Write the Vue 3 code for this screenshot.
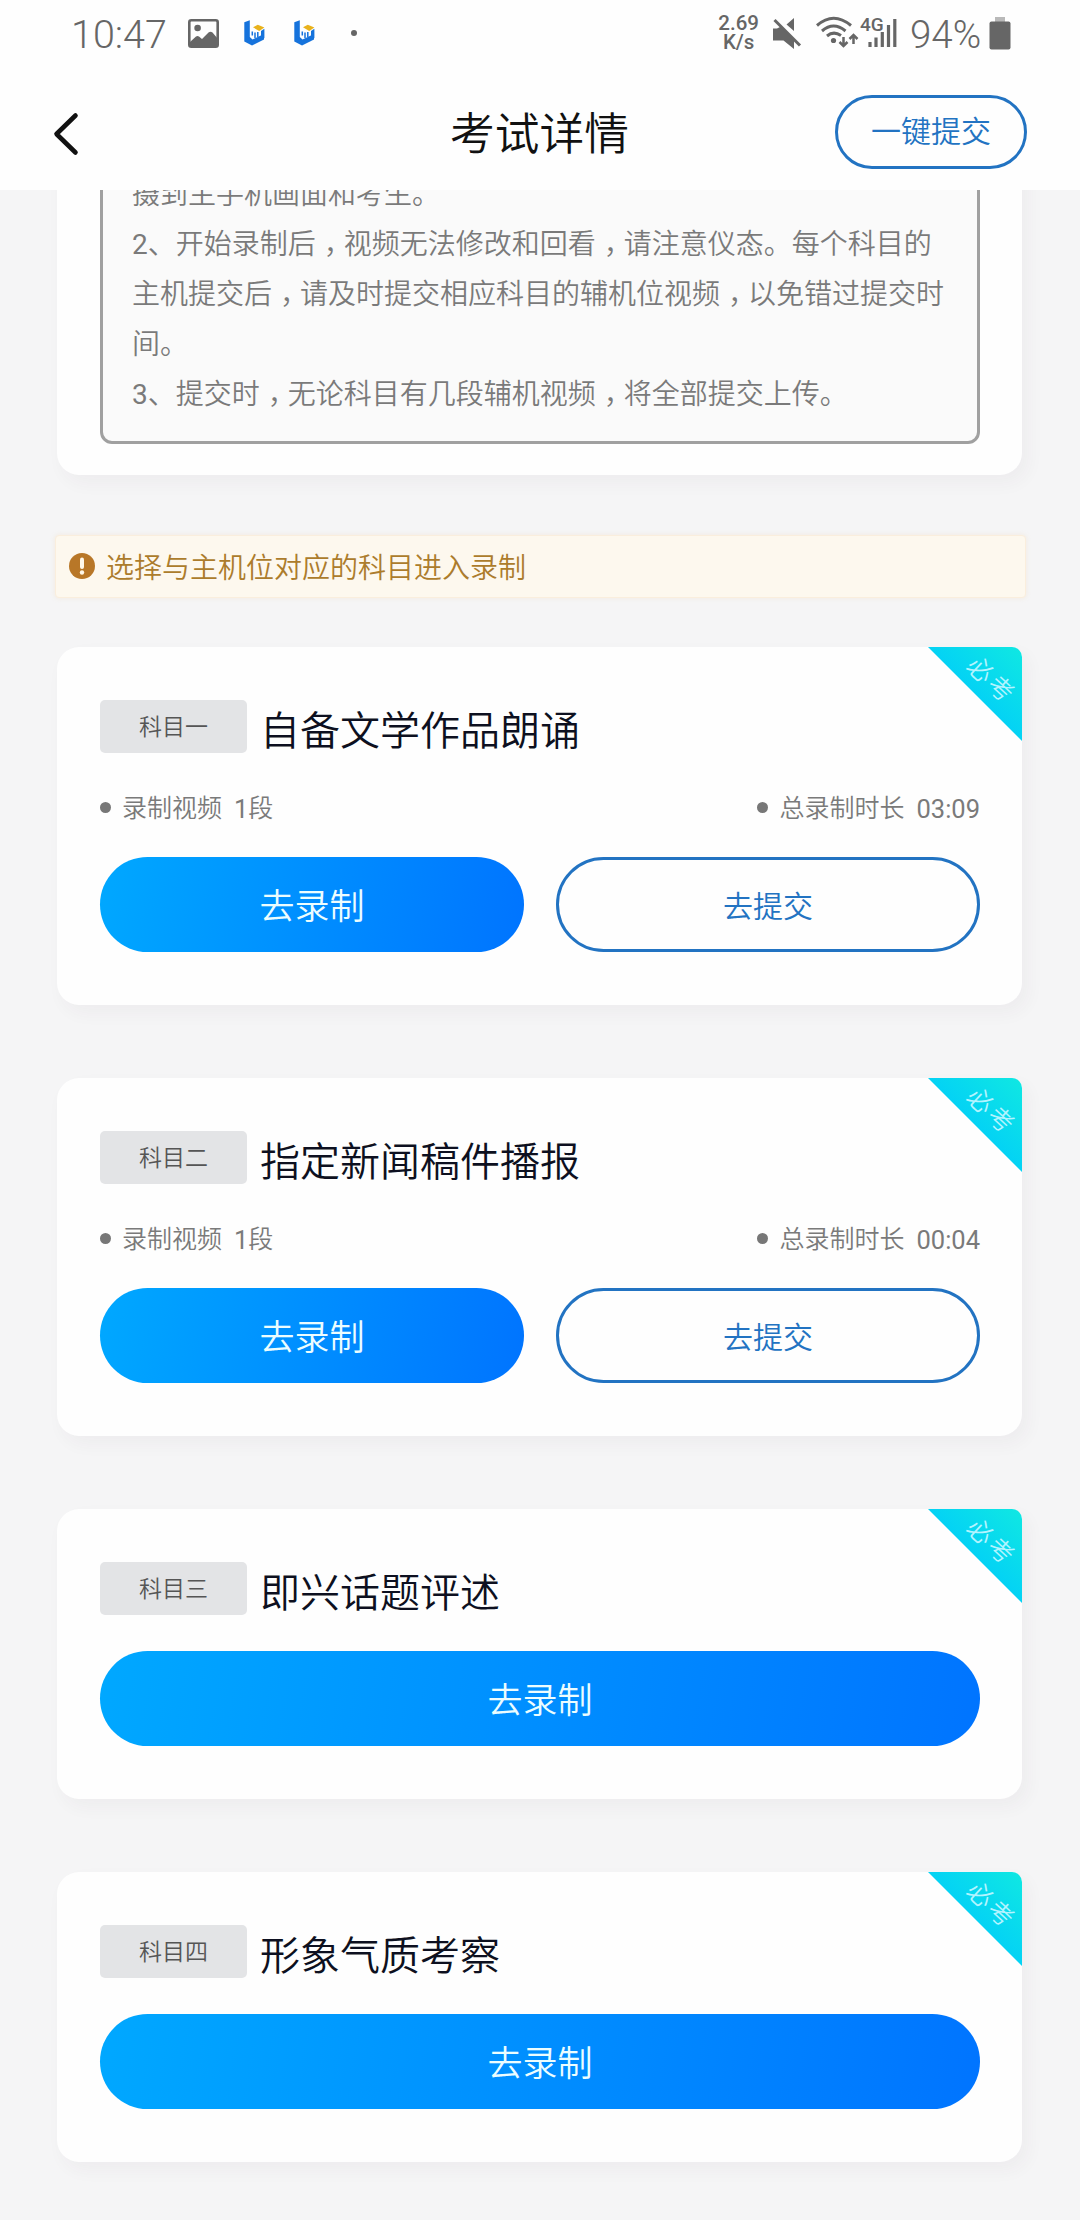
<script setup>
const notes = [
  { text: '摄到主手机画面和考生。' },
  { no: '2', text: '、开始录制后，视频无法修改和回看，请注意仪态。每个科目的' },
  { text: '主机提交后，请及时提交相应科目的辅机位视频，以免错过提交时' },
  { text: '间。' },
  { no: '3', text: '、提交时，无论科目有几段辅机视频，将全部提交上传。' },
].map((line) => ({ no: line.no, parts: line.text.split('，') }))

const subjects = [
  { tag: '科目一', title: '自备文学作品朗诵', clips: 1, time: '03:09' },
  { tag: '科目二', title: '指定新闻稿件播报', clips: 1, time: '00:04' },
  { tag: '科目三', title: '即兴话题评述' },
  { tag: '科目四', title: '形象气质考察' },
]
</script>

<template>
  <div class="screen">
    <header class="top">
      <div class="status">
        <span class="clock">10:47</span>
        <svg class="pic" width="31" height="29" viewBox="0 0 31 29">
          <rect x="1.3" y="1.3" width="28.4" height="26.4" rx="2" fill="none" stroke="#666" stroke-width="2.6" />
          <circle cx="9.6" cy="9" r="3.3" fill="#666" />
          <path d="M2 23 L8 17.5 Q9.500 16.500 11 17.500 L14 20 L20.500 13.500 Q22.500 12 24.500 13.500 L30 20 V27 H2 Z" fill="#666" />
        </svg>
        <svg v-for="n in 2" :key="n" class="logo" width="21" height="26" viewBox="0 0 21 26">
          <path d="M.3 2.300 L5.800 .3 V17 L8.500 19.500 L20 14 V19.500 L8 25.500 L.3 21.600 Z" fill="#1673dc" />
          <path d="M9 7.300 L13.800 4.800 L20.400 7.400 L15.200 10.900 Z" fill="#e9b21c" />
          <path d="M17 11 L20.400 8.800 V18 L17 20 Z" fill="#1673dc" />
          <path d="M8.300 11.500 V15.500 M11 12.500 V18 M13.800 12 V17" stroke="#1673dc" stroke-width="1.500" />
        </svg>
        <i class="more"></i>
        <div class="right">
          <div class="speed"><span>2.69</span><span>K/s</span></div>
          <svg class="mute" width="29" height="31" viewBox="0 0 29 31">
            <path d="M0 10.500 H4 L8 8.500 L21 22 V31 L10.500 22.500 H0 Z M13.500 6.500 L21 0 V13 Z" fill="#666" />
            <path d="M1.500 2 L27 27.500" stroke="#666" stroke-width="3" />
          </svg>
          <svg class="wifi" width="41" height="31" viewBox="0 0 41 31">
            <g fill="none" stroke="#666" stroke-width="3">
              <path d="M1 8.500 Q17.500 -6 35 8.500" />
              <path d="M6 14 Q17.500 4 29.500 14" />
              <path d="M11 19 Q17.500 13.500 25 18.500" />
            </g>
            <circle cx="17.500" cy="23.500" r="2.600" fill="#666" />
            <path d="M27.500 20 V29 M23.500 25 L27.500 29 L31.500 25 M37.500 27 V18 M33.500 22 L37.500 18 L41.500 22" fill="none" stroke="#666" stroke-width="2.500" />
          </svg>
          <svg class="signal" width="37" height="32" viewBox="0 0 37 32">
            <text x="0" y="15" font-family="Roboto, sans-serif" font-size="19" font-weight="500" fill="#666">4G</text>
            <path d="M10 26 V31 M16 21.500 V31 M22.300 16 V31 M28.500 9 V31 M34.800 3 V31" stroke="#666" stroke-width="3.200" />
          </svg>
          <span class="percent">94%</span>
          <svg class="battery" width="22" height="33" viewBox="0 0 22 33">
            <rect x="6" y="0" width="10" height="5" fill="#b9b9b9" />
            <rect x="0.500" y="4.500" width="21" height="28" rx="2" fill="#666" />
          </svg>
        </div>
      </div>
      <nav class="bar">
        <svg width="28" height="46" viewBox="0 0 28 46">
          <path d="M23.500 4.500 L4.500 23 L23.500 41.500" fill="none" stroke="#111" stroke-width="4.600" stroke-linecap="round" stroke-linejoin="round" />
        </svg>
        <h1>考试详情</h1>
        <button class="submit-all">一键提交</button>
      </nav>
    </header>

    <main class="scroll">
      <section class="card notes">
        <div class="box">
          <p v-for="(line, i) in notes" :key="i"><b v-if="line.no" class="num">{{ line.no }}</b><template v-for="(part, j) in line.parts" :key="j"><span v-if="j" class="comma">，</span>{{ part }}</template></p>
        </div>
      </section>

      <div class="alert">
        <svg width="26" height="26" viewBox="0 0 26 26">
          <circle cx="13" cy="13" r="13" fill="#b87728" />
          <path d="M13 6.500 V14" stroke="#fff8ea" stroke-width="4" stroke-linecap="round" />
          <circle cx="13" cy="19.500" r="2.200" fill="#fff8ea" />
        </svg>
        <span>选择与主机位对应的科目进入录制</span>
      </div>

      <section v-for="s in subjects" :key="s.tag" class="card subject">
        <div class="ribbon"><span>必考</span></div>
        <div class="head">
          <span class="tag">{{ s.tag }}</span>
          <h2>{{ s.title }}</h2>
        </div>
        <div v-if="s.clips" class="meta">
          <span class="item"><i></i>录制视频<b class="num">{{ s.clips }}</b>段</span>
          <span class="item"><i></i>总录制时长<b class="num">{{ s.time }}</b></span>
        </div>
        <div class="actions" :class="{ solo: !s.clips }">
          <button class="record">去录制</button>
          <button v-if="s.clips" class="send">去提交</button>
        </div>
      </section>
    </main>
  </div>
</template>

<style>
body {
  background: #f5f5f6;
}
</style>

<style scoped>
* {
  box-sizing: border-box;
  margin: 0;
  padding: 0;
}
.screen {
  width: 1080px;
  height: 2220px;
  display: flex;
  flex-direction: column;
  overflow: hidden;
  background: #f5f5f6;
  font-family: Roboto, "Noto Sans CJK SC", sans-serif;
  font-weight: 350;
}
button {
  font: inherit;
  background: none;
  border: 0;
  white-space: nowrap;
}
.num {
  font-weight: 400;
}
.top {
  height: 190px;
  flex: none;
  background: #fefefe;
}
.status {
  height: 66px;
  padding: 0 69px 0 71px;
  display: flex;
  align-items: center;
  color: #666;
}
.clock {
  font-size: 39.5px;
  line-height: 66px;
  width: 97px;
  padding-top: 3px;
}
.pic {
  margin-left: 20px;
}
.logo {
  margin-left: 25px;
}
.logo + .logo {
  margin-left: 29px;
}
.more {
  width: 6px;
  height: 6px;
  border-radius: 50%;
  background: #666;
  margin-left: 36px;
}
.right {
  margin-left: auto;
  display: flex;
  align-items: center;
}
.speed {
  display: flex;
  flex-direction: column;
  align-items: center;
  font-size: 20.5px;
  font-weight: 500;
  line-height: 19px;
}
.mute {
  margin-left: 14px;
}
.wifi {
  margin-left: 14px;
  margin-top: -1px;
  overflow: visible;
}
.signal {
  margin-left: 3px;
  margin-top: -2px;
  overflow: visible;
}
.percent {
  font-size: 38.5px;
  width: 70px;
  margin-left: 13px;
  padding-top: 3px;
}
.battery {
  margin-left: 9px;
}
.bar {
  height: 134px;
  padding: 0 53px 2px 52px;
  display: grid;
  grid-template-columns: 1fr auto 1fr;
  align-items: center;
}
.bar h1 {
  padding-top: 6px;
  font-size: 44.7px;
  line-height: 60px;
  font-weight: 350;
  color: #111;
}
.bar svg {
  margin-top: 4px;
}
.submit-all {
  justify-self: end;
  width: 192px;
  height: 74px;
  border: 3px solid #2273c2;
  border-radius: 37px;
  font-size: 30px;
  line-height: 68px;
  color: #2273c2;
}
.scroll {
  flex: 1;
  overflow: hidden;
  padding: 0 58px 0 57px;
}
.card {
  background: #fefefe;
  border-radius: 22px;
  box-shadow: 6px 8px 18px rgba(60, 50, 60, 0.045);
}
.notes {
  height: 325px;
  margin-top: -40px;
  padding: 0 42px 31px 43px;
}
.box {
  height: 294px;
  padding: 17px 0 21px 29px;
  border: 3px solid #a0a0a0;
  border-radius: 12px;
  background: #fafafa;
}
.box p {
  font-size: 28px;
  line-height: 50px;
  color: #7a7a7a;
  white-space: nowrap;
}
.comma {
  margin-left: 8px;
  margin-right: 6px;
  font-feature-settings: "halt";
}
.alert {
  height: 63px;
  margin: 60px -4px 49px -2px;
  padding: 0 13px 2px;
  display: flex;
  align-items: center;
  gap: 11px;
  background: #fdf8ee;
  border: 1px solid #faeedd;
  box-shadow: 0 0 5px rgba(240, 210, 165, 0.3);
  border-radius: 4px;
  font-size: 28px;
  color: #ac7c2c;
}
.subject {
  position: relative;
  padding: 53px 42px 53px 43px;
  margin-bottom: 73px;
  border-top-right-radius: 10px;
}
.ribbon {
  position: absolute;
  top: 0;
  right: 0;
  width: 94px;
  height: 94px;
  display: flex;
  justify-content: center;
  align-items: center;
  background: linear-gradient(45deg, #00ccfa 35%, #10e8e2);
  border-top-right-radius: 10px;
  clip-path: polygon(0 0, 100% 0, 100% 100%);
}
.ribbon span {
  font-size: 25px;
  line-height: 28px;
  letter-spacing: 3px;
  color: #b4f4ff;
  transform: translate(16px, -13px) rotate(43deg);
  white-space: nowrap;
}
.head {
  height: 53px;
  display: flex;
  align-items: center;
}
.tag {
  width: 147px;
  height: 53px;
  border-radius: 5px;
  background: #e3e4e6;
  font-size: 23px;
  line-height: 56px;
  text-align: center;
  color: #555;
}
.head h2 {
  margin-left: 13px;
  padding-top: 10px;
  font-size: 40px;
  line-height: 53px;
  font-weight: 350;
  color: #0d1020;
}
.meta {
  display: flex;
  justify-content: space-between;
  height: 36px;
  margin-top: 37px;
  font-size: 25px;
  line-height: 38px;
  color: #7a7a7a;
}
.item {
  display: flex;
  align-items: center;
  height: 38px;
}
.item i {
  width: 11px;
  height: 11px;
  border-radius: 50%;
  background: #777;
  margin: 0 11px 4px 0;
}
.item b {
  font-size: 25.5px;
  margin-left: 12px;
}
.actions {
  display: grid;
  grid-template-columns: 1fr 1fr;
  gap: 32px;
  margin-top: 31px;
}
.actions.solo {
  grid-template-columns: 1fr;
  margin-top: 36px;
}
.actions button {
  height: 95px;
  border-radius: 48px;
}
.record {
  background: linear-gradient(100deg, #00a8ff, #0074ff);
  padding-bottom: 2px;
  font-size: 35px;
  color: #ecfdff;
}
.actions .send {
  border: 3px solid #2273c2;
  padding-bottom: 2px;
  font-size: 30px;
  color: #2273c2;
}
</style>
